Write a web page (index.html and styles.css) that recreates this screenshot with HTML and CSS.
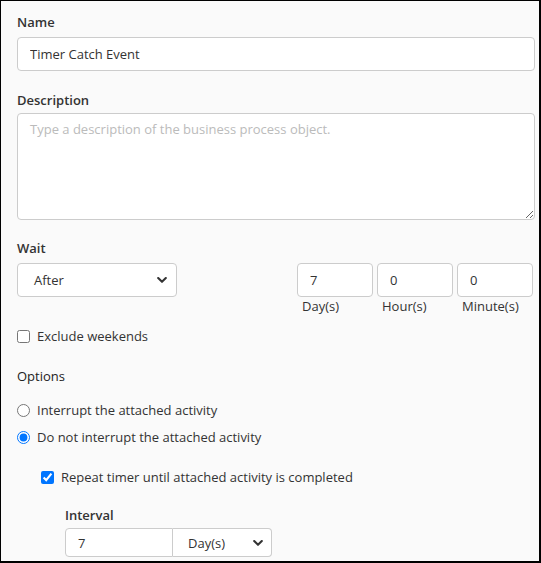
FILE: index.html
```
<!DOCTYPE html>
<html>
<head>
<meta charset="utf-8">
<link rel="stylesheet" href="styles.css">
</head>
<body>
<div class="panel">
  <div class="label">Name</div>
  <input class="text-input name-input" type="text" value="Timer Catch Event">

  <div class="label gap-desc">Description</div>
  <textarea class="textarea" placeholder="Type a description of the business process object."></textarea>

  <div class="label gap-wait">Wait</div>
  <div class="wait-row">
    <div class="select wait-select">
      <span class="select-text">After</span>
      <svg class="chev" width="10" height="6" viewBox="0 0 10 6"><path d="M1.2 1.1 L5 4.8 L8.8 1.1" fill="none" stroke="#333" stroke-width="2.1" stroke-linecap="round" stroke-linejoin="round"/></svg>
    </div>
    <div class="units">
      <div class="unit">
        <input class="text-input num" type="text" value="7">
        <div class="unit-label">Day(s)</div>
      </div>
      <div class="unit">
        <input class="text-input num" type="text" value="0">
        <div class="unit-label">Hour(s)</div>
      </div>
      <div class="unit">
        <input class="text-input num" type="text" value="0">
        <div class="unit-label">Minute(s)</div>
      </div>
    </div>
  </div>

  <label class="check-row exclude">
    <input type="checkbox" class="box">
    <span>Exclude weekends</span>
  </label>

  <div class="label options">Options</div>

  <label class="check-row radio1">
    <input type="radio" name="opt" class="box">
    <span>Interrupt the attached activity</span>
  </label>
  <label class="check-row radio2">
    <input type="radio" name="opt" class="box" checked>
    <span>Do not interrupt the attached activity</span>
  </label>

  <label class="check-row repeat">
    <input type="checkbox" class="box" checked>
    <span>Repeat timer until attached activity is completed</span>
  </label>

  <div class="label interval-label">Interval</div>
  <div class="interval-row">
    <input class="interval-input" type="text" value="7">
    <div class="select interval-select">
      <span class="select-text">Day(s)</span>
      <svg class="chev" width="10" height="6" viewBox="0 0 10 6"><path d="M1.2 1.1 L5 4.8 L8.8 1.1" fill="none" stroke="#333" stroke-width="2.1" stroke-linecap="round" stroke-linejoin="round"/></svg>
    </div>
  </div>
</div>
</body>
</html>
```
FILE: styles.css
```
* { box-sizing: border-box; }
html, body { margin: 0; padding: 0; }
body {
  font-family: "Open Sans", "Liberation Sans", sans-serif;
  font-size: 13px;
  color: #333;
}
.panel {
  width: 541px;
  height: 563px;
  overflow: hidden;
  background: #fafafa;
  border-style: solid;
  border-color: #000;
  border-width: 1px 2px 2px 1px;
  padding: 12px 4px 0 16px;
  display: flex;
  flex-direction: column;
}
.label {
  font-weight: 600;
  line-height: 18px;
  height: 18px;
  color: #333;
}
.text-input {
  font-family: inherit;
  font-size: 13px;
  color: #333;
  background: #fff;
  border: 1px solid #ccc;
  border-radius: 4px;
  height: 34px;
  padding: 0 12px;
  outline: none;
  margin: 0;
}
.name-input { margin-top: 6px; width: 518px; }
.gap-desc { margin-top: 20px; }
.textarea {
  margin-top: 4px;
  width: 518px;
  height: 107px;
  font-family: inherit;
  font-size: 13px;
  color: #333;
  background: #fff;
  border: 1px solid #ccc;
  border-radius: 4px;
  padding: 6px 12px;
  line-height: 18px;
  outline: none;
  display: block;
}
.textarea::placeholder { color: #bbb; }
.gap-wait { margin-top: 19px; }
.wait-row {
  margin-top: 6px;
  display: flex;
  justify-content: space-between;
  width: 516px;
}
.select {
  display: flex;
  align-items: center;
  justify-content: space-between;
  background: #fff;
  border: 1px solid #ccc;
  color: #333;
}
.wait-select {
  width: 160px;
  height: 34px;
  border-radius: 4px;
  padding: 0 9px 0 16px;
}
.units { display: flex; gap: 4px; }
.unit { display: flex; flex-direction: column; }
.num { width: 76px; }
.unit-label {
  line-height: 18px;
  padding-left: 5px;
}
.check-row {
  display: flex;
  align-items: center;
  line-height: 18px;
  height: 18px;
}
.box {
  margin: 0 7px 0 0;
  width: 13px;
  height: 13px;
  accent-color: #0075ff;
}
.exclude { margin-top: 12px; }
.options { margin-top: 22px; font-weight: 400; color: #222; }
.radio1 { margin-top: 16px; }
.radio2 { margin-top: 9px; }
.repeat { margin-top: 22px; margin-left: 24px; }
.interval-label { margin-top: 20px; margin-left: 48px; }
.interval-row {
  margin-top: 4px;
  margin-left: 48px;
  display: flex;
  height: 29px;
}
.interval-input {
  width: 108px;
  height: 29px;
  font-family: inherit;
  font-size: 13px;
  color: #333;
  background: #fff;
  border: 1px solid #ccc;
  border-radius: 4px 0 0 4px;
  padding: 0 12px;
  outline: none;
  margin: 0;
}
.interval-select {
  width: 99px;
  height: 29px;
  border-left: none;
  border-radius: 0 4px 4px 0;
  padding: 0 8px 0 15px;
}
```
